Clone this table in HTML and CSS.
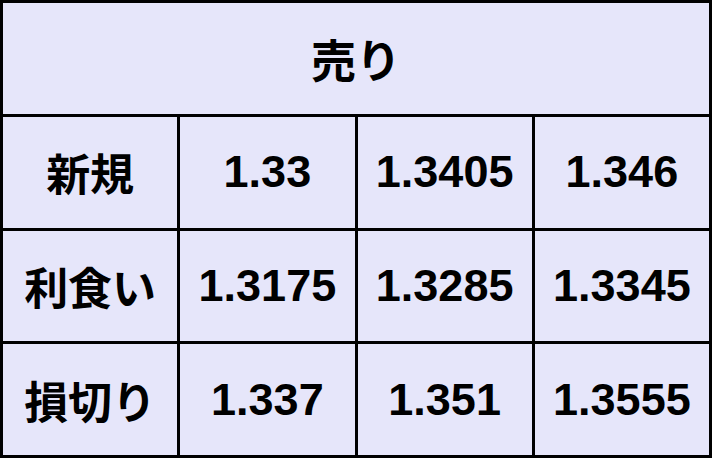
FILE: index.html
```html
<!DOCTYPE html>
<html lang="ja">
<head>
<meta charset="utf-8">
<title>売り</title>
<link rel="stylesheet" href="styles.css">
</head>
<body>
<div class="grid">
  <div class="cell head">売り</div>
  <div class="cell label">新規</div>
  <div class="cell">1.33</div>
  <div class="cell">1.3405</div>
  <div class="cell">1.346</div>
  <div class="cell label">利食い</div>
  <div class="cell">1.3175</div>
  <div class="cell">1.3285</div>
  <div class="cell">1.3345</div>
  <div class="cell label">損切り</div>
  <div class="cell">1.337</div>
  <div class="cell">1.351</div>
  <div class="cell">1.3555</div>
</div>
</body>
</html>
```
FILE: styles.css
```css
html, body {
  margin: 0;
  padding: 0;
  background: #E6E6FA;
}
.grid {
  width: 712px;
  height: 458px;
  box-sizing: border-box;
  padding: 3px;
  gap: 3px;
  background: #000;
  display: grid;
  grid-template-columns: repeat(4, 1fr);
  grid-template-rows: repeat(4, 1fr);
}
.cell {
  background: #E6E6FA;
  display: flex;
  align-items: center;
  justify-content: center;
  font-family: "Liberation Sans", "Noto Sans CJK JP", sans-serif;
  font-weight: bold;
  font-size: 45px;
  color: #000;
}
.head {
  grid-column: 1 / span 4;
}
.label {
  font-family: "Noto Sans CJK JP", sans-serif;
  font-weight: 700;
  font-size: 44px;
}
```
